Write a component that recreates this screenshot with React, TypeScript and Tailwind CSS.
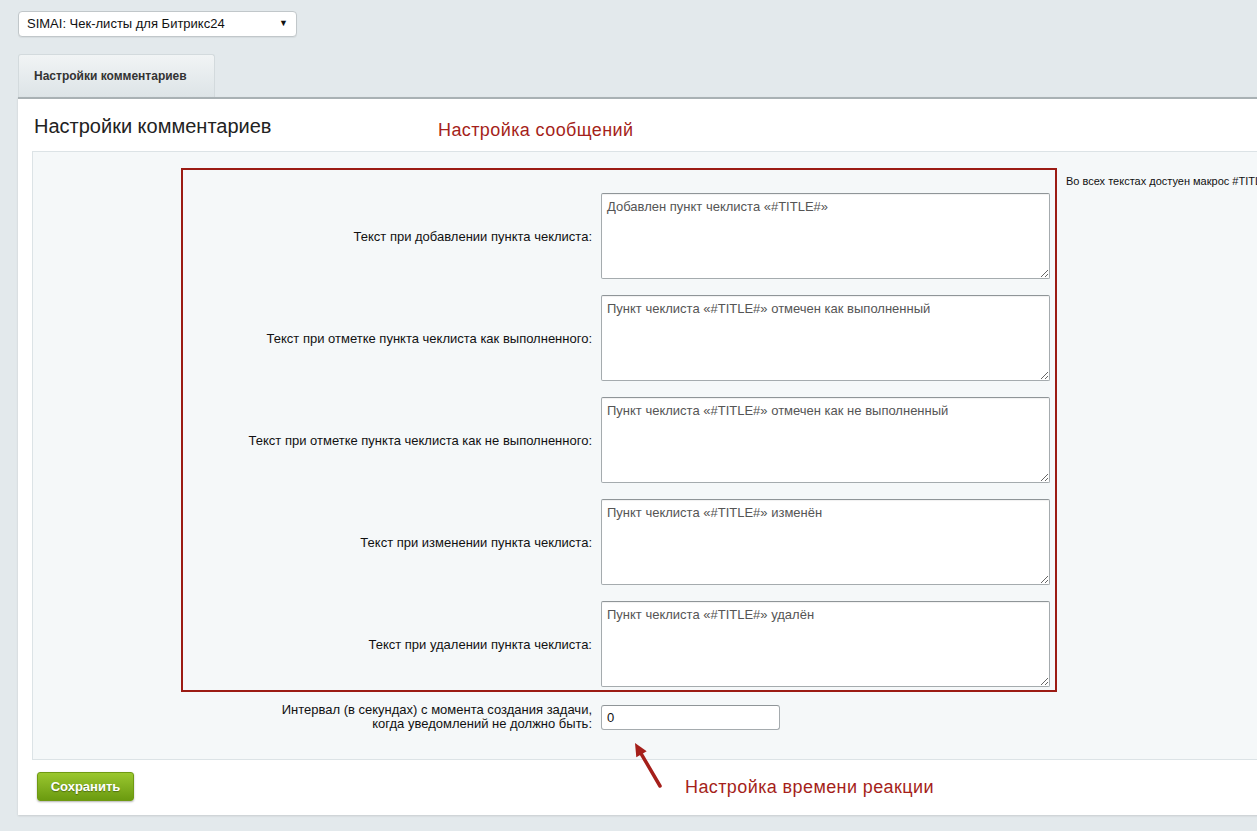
import React from 'react';

const ROWS = [
  { label: 'Текст при добавлении пункта чеклиста:', value: 'Добавлен пункт чеклиста «#TITLE#»' },
  { label: 'Текст при отметке пункта чеклиста как выполненного:', value: 'Пункт чеклиста «#TITLE#» отмечен как выполненный' },
  { label: 'Текст при отметке пункта чеклиста как не выполненного:', value: 'Пункт чеклиста «#TITLE#» отмечен как не выполненный' },
  { label: 'Текст при изменении пункта чеклиста:', value: 'Пункт чеклиста «#TITLE#» изменён' },
  { label: 'Текст при удалении пункта чеклиста:', value: 'Пункт чеклиста «#TITLE#» удалён' },
];

export default function App() {
  return (
    <div className="relative min-h-[831px] overflow-hidden bg-[#e3e9ec] pt-[11px] font-['Liberation_Sans',Arial,sans-serif] text-[#000]">
      {/* module select */}
      <div className="ml-[18px] flex h-[26px] w-[279px] items-center justify-between rounded-[4px] border border-[#c1c7ca] bg-white pl-[8px] pr-[8px] text-[13px] text-[#111] shadow-[0_1px_1px_rgba(0,0,0,0.06)]">
        <span>SIMAI: Чек-листы для Битрикс24</span>
        <span className="text-[9px]">▼</span>
      </div>

      {/* tab */}
      <div className="ml-[18px] mt-[17px] flex h-[43px] w-[197px] items-center rounded-t-[3px] border border-b-0 border-[#d3dadd] bg-gradient-to-b from-[#f1f4f5] to-[#dde4e7] pl-[15px] text-[12px] font-bold text-[#333]">
        Настройки комментариев
      </div>

      {/* main panel */}
      <div className="ml-[18px] mr-[-20px] border-t-[2px] border-[#a9b1b4] bg-white shadow-[0_1px_2px_rgba(0,0,0,0.12)]">
        <div className="flex h-[52px] items-start pl-[16px] pt-[15px]">
          <h2 className="w-[404px] text-[20px] leading-[24px] font-normal text-[#222]">Настройки комментариев</h2>
          <span className="mt-[4px] text-[18px] leading-[24px] tracking-[0.4px] text-[#a51f1a]">Настройка сообщений</span>
        </div>

        <div className="ml-[14px] border border-r-0 border-[#dce3e6] bg-[#f5f8f9] pt-[16px] pb-[28px]">
          <div className="flex items-start">
            <div className="ml-[148px] flex w-[876px] shrink-0 flex-col gap-[16px] border-2 border-[#9b1b14] pt-[23px] pr-[5px] pb-[3px]">
              {ROWS.map((row) => (
                <div key={row.label} className="grid grid-cols-[409px_449px] items-center gap-x-[9px]">
                  <label className="text-right text-[13px] leading-[15px] text-[#111]">{row.label}</label>
                  <textarea
                    readOnly
                    defaultValue={row.value}
                    className="h-[86px] w-[449px] rounded-[2px] border border-[#a5abae] border-t-[#8f9598] bg-white px-[5px] pt-[5px] pb-[3px] text-[13px] leading-[16px] text-[#555] shadow-[inset_0_1px_1px_rgba(0,0,0,0.06)] outline-none"
                  />
                </div>
              ))}
            </div>
            <div className="ml-[9px] mt-[5px] whitespace-nowrap text-[11px] text-[#111]">Во всех текстах достуен макрос #TITLE#</div>
          </div>

          <div className="ml-[150px] mt-[11px] grid grid-cols-[409px_449px] items-center gap-x-[9px]">
            <label className="text-right text-[13px] leading-[14px] text-[#111]">
              Интервал (в секундах) с момента создания задачи,
              <br />
              когда уведомлений не должно быть:
            </label>
            <input
              readOnly
              defaultValue="0"
              className="h-[25px] w-[179px] rounded-[3px] border border-[#a5abae] border-t-[#8f9598] bg-white px-[5px] text-[13px] text-[#111] outline-none"
            />
          </div>
        </div>

        <div className="flex items-center pl-[19px] pt-[12px] pb-[14px]">
          <button className="h-[29px] w-[97px] rounded-[3px] border border-[#6f9a12] bg-gradient-to-b from-[#9ac72e] to-[#6b9b0f] text-[13px] font-bold text-white shadow-[0_1px_2px_rgba(0,0,0,0.3)] [text-shadow:0_1px_1px_rgba(0,0,0,0.35)]">
            Сохранить
          </button>
          <span className="ml-[551px] text-[18px] leading-[24px] tracking-[0.4px] text-[#a51f1a]">Настройка времени реакции</span>
        </div>
      </div>

      {/* annotation arrow */}
      <svg className="absolute left-[630px] top-[738px]" width="40" height="55" viewBox="0 0 40 55">
        <line x1="30" y1="48" x2="11.5" y2="16.3" stroke="#a51f1a" strokeWidth="3.5" strokeLinecap="round" />
        <polygon points="5,5 16.7,13.3 6.3,19.3" fill="#a51f1a" />
      </svg>
    </div>
  );
}
